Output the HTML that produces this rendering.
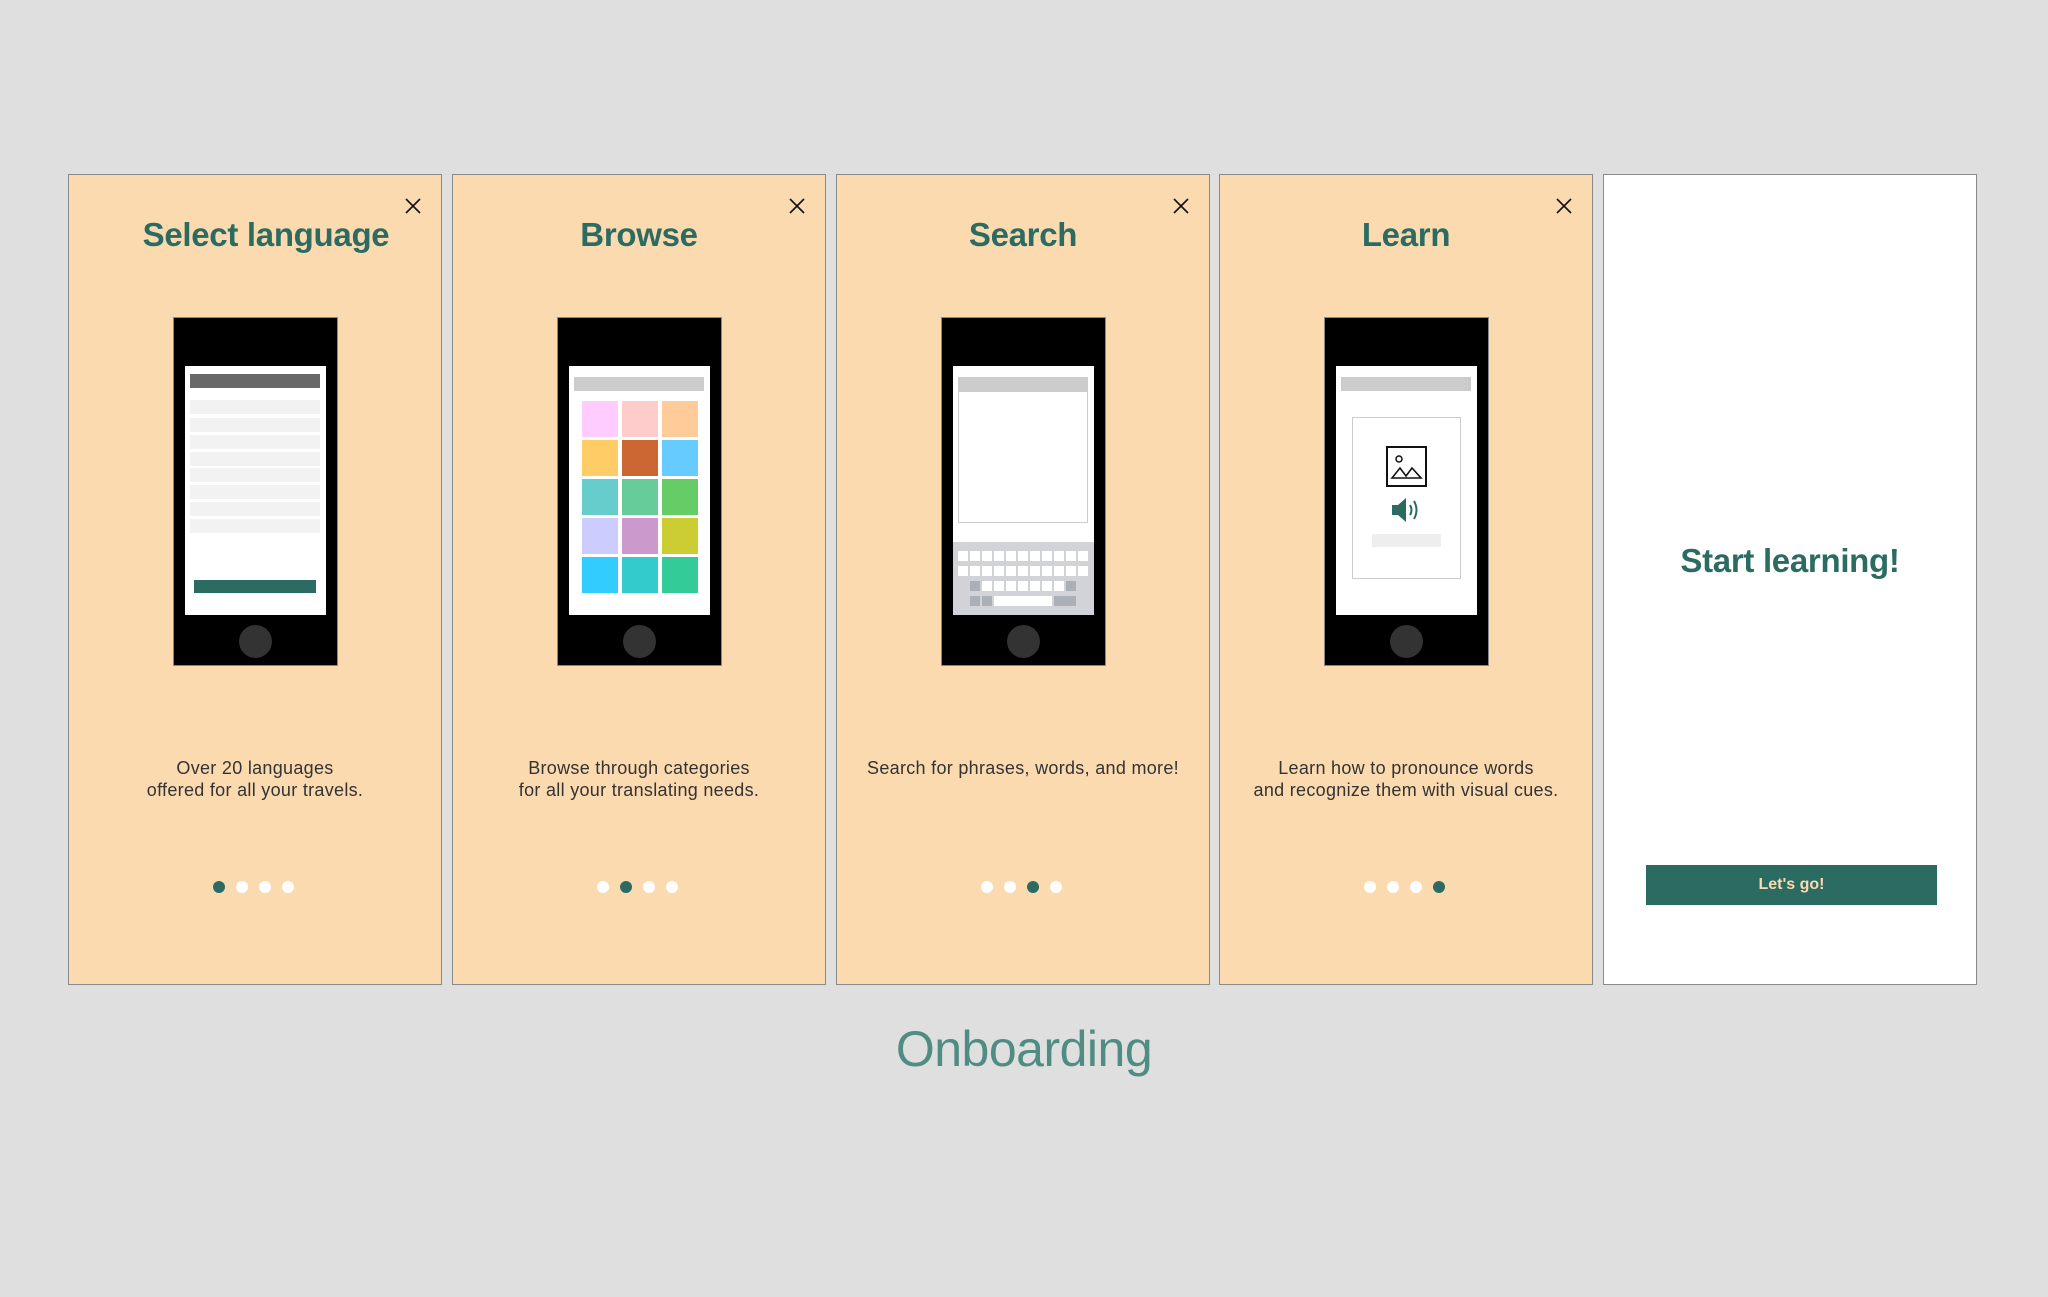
<!DOCTYPE html>
<html><head><meta charset="utf-8">
<style>
*{margin:0;padding:0;box-sizing:border-box}
body{width:2048px;height:1297px;background:#dfdfdf;position:relative;overflow:hidden;font-family:"Liberation Sans",sans-serif}
.card{position:absolute;top:174px;width:374px;height:811px;background:#fbdab0;border:1px solid #8a8a8a}
.card.w{background:#fff}
.t{position:absolute;left:0;right:0;top:213px;text-align:center;font-weight:bold;font-size:33px;color:#2b6b62;letter-spacing:-0.3px}
.x{position:absolute;left:335px;top:22px;width:18px;height:18px}
.ph{position:absolute;left:104px;top:142px;width:165px;height:349px;background:#000;border:1px solid #888}
.sc{position:absolute;left:11px;top:48px;width:141px;height:249px;background:#fff;overflow:hidden}
.hb{position:absolute;top:307px;width:33px;height:33px;border-radius:50%;background:#333;left:65px}
.d{position:absolute;left:0;right:0;text-align:center;font-size:18px;line-height:22px;color:#333;top:582px;letter-spacing:0.3px}
.dots{position:absolute;top:706px;left:-4px;right:0;display:flex;justify-content:center;gap:11px}
.dots i{width:12px;height:12px;border-radius:50%;background:#fff;display:block}
.dots i.on{background:#2b6b62}
.a{position:absolute}
</style></head><body>

<div class="card" style="left:68px">
<div class="t" style="top:41px;left:22px">Select language</div>
<svg class="x" viewBox="0 0 18 18"><path d="M2 2L16 16M16 2L2 16" stroke="#111" stroke-width="1.6"/></svg>
<div class="ph"><div class="sc">
<div class="a" style="left:5px;top:8px;width:130px;height:14px;background:#686868"></div>
<div class="a" style="left:5px;top:34px;width:130px;height:14px;background:#f2f2f2"></div>
<div class="a" style="left:5px;top:52px;width:130px;height:14px;background:#f2f2f2"></div>
<div class="a" style="left:5px;top:69px;width:130px;height:14px;background:#f2f2f2"></div>
<div class="a" style="left:5px;top:86px;width:130px;height:14px;background:#f2f2f2"></div>
<div class="a" style="left:5px;top:102px;width:130px;height:14px;background:#f2f2f2"></div>
<div class="a" style="left:5px;top:119px;width:130px;height:14px;background:#f2f2f2"></div>
<div class="a" style="left:5px;top:136px;width:130px;height:14px;background:#f2f2f2"></div>
<div class="a" style="left:5px;top:153px;width:130px;height:14px;background:#f2f2f2"></div>
<div class="a" style="left:9px;top:214px;width:122px;height:13px;background:#2b6b62"></div>
</div><div class="hb"></div></div>
<div class="d">Over 20 languages<br>offered for all your travels.</div>
<div class="dots"><i class="on"></i><i></i><i></i><i></i></div>
</div>

<div class="card" style="left:452px">
<div class="t" style="top:41px">Browse</div>
<svg class="x" viewBox="0 0 18 18"><path d="M2 2L16 16M16 2L2 16" stroke="#111" stroke-width="1.6"/></svg>
<div class="ph"><div class="sc">
<div class="a" style="left:5px;top:11px;width:130px;height:14px;background:#ccc"></div>
<div class="a" style="left:13px;top:35px;width:116px;display:grid;grid-template-columns:36px 36px 36px;grid-auto-rows:36px;gap:3px 4px">
<i style="background:#ffccff"></i><i style="background:#ffcccc"></i><i style="background:#ffcc99"></i>
<i style="background:#ffcc66"></i><i style="background:#cc6633"></i><i style="background:#66ccff"></i>
<i style="background:#66cccc"></i><i style="background:#66cc99"></i><i style="background:#66cc66"></i>
<i style="background:#ccccff"></i><i style="background:#cc99cc"></i><i style="background:#cccc33"></i>
<i style="background:#33ccff"></i><i style="background:#33cccc"></i><i style="background:#33cc99"></i>
</div>
</div><div class="hb"></div></div>
<div class="d">Browse through categories<br>for all your translating needs.</div>
<div class="dots"><i></i><i class="on"></i><i></i><i></i></div>
</div>

<div class="card" style="left:836px">
<div class="t" style="top:41px">Search</div>
<svg class="x" viewBox="0 0 18 18"><path d="M2 2L16 16M16 2L2 16" stroke="#111" stroke-width="1.6"/></svg>
<div class="ph"><div class="sc">
<div class="a" style="left:5px;top:11px;width:130px;height:146px;border:1px solid #ccc"></div>
<div class="a" style="left:5px;top:11px;width:130px;height:15px;background:#ccc"></div>
<div class="a" style="left:0;top:176px;width:141px;height:73px;background:#d1d3d9">
<svg width="141" height="73" viewBox="0 0 141 73">
<g fill="#fff">
<rect x="5" y="9" width="10" height="10"/><rect x="17" y="9" width="10" height="10"/><rect x="29" y="9" width="10" height="10"/><rect x="41" y="9" width="10" height="10"/><rect x="53" y="9" width="10" height="10"/><rect x="65" y="9" width="10" height="10"/><rect x="77" y="9" width="10" height="10"/><rect x="89" y="9" width="10" height="10"/><rect x="101" y="9" width="10" height="10"/><rect x="113" y="9" width="10" height="10"/><rect x="125" y="9" width="10" height="10"/>
<rect x="5" y="24" width="10" height="10"/><rect x="17" y="24" width="10" height="10"/><rect x="29" y="24" width="10" height="10"/><rect x="41" y="24" width="10" height="10"/><rect x="53" y="24" width="10" height="10"/><rect x="65" y="24" width="10" height="10"/><rect x="77" y="24" width="10" height="10"/><rect x="89" y="24" width="10" height="10"/><rect x="101" y="24" width="10" height="10"/><rect x="113" y="24" width="10" height="10"/><rect x="125" y="24" width="10" height="10"/>
<rect x="29" y="39" width="10" height="10"/><rect x="41" y="39" width="10" height="10"/><rect x="53" y="39" width="10" height="10"/><rect x="65" y="39" width="10" height="10"/><rect x="77" y="39" width="10" height="10"/><rect x="89" y="39" width="10" height="10"/><rect x="101" y="39" width="10" height="10"/>
<rect x="41" y="54" width="58" height="10"/>
</g>
<g fill="#abb0b8">
<rect x="17" y="39" width="10" height="10"/><rect x="113" y="39" width="10" height="10"/>
<rect x="17" y="54" width="10" height="10"/><rect x="29" y="54" width="10" height="10"/><rect x="101" y="54" width="22" height="10"/>
</g></svg></div>
</div><div class="hb"></div></div>
<div class="d">Search for phrases, words, and more!</div>
<div class="dots"><i></i><i></i><i class="on"></i><i></i></div>
</div>

<div class="card" style="left:1219px">
<div class="t" style="top:41px">Learn</div>
<svg class="x" viewBox="0 0 18 18"><path d="M2 2L16 16M16 2L2 16" stroke="#111" stroke-width="1.6"/></svg>
<div class="ph"><div class="sc">
<div class="a" style="left:5px;top:11px;width:130px;height:14px;background:#ccc"></div>
<div class="a" style="left:16px;top:51px;width:109px;height:162px;border:1px solid #ccc"></div>
<svg class="a" style="left:50px;top:80px" width="41" height="41" viewBox="0 0 41 41">
<rect x="1" y="1" width="39" height="39" fill="#fff" stroke="#111" stroke-width="2"/>
<circle cx="13" cy="13" r="3" fill="none" stroke="#111" stroke-width="1.5"/>
<path d="M6 32L14 22L20 30L26 22L35 32Z" fill="none" stroke="#111" stroke-width="1.6"/>
</svg>
<svg class="a" style="left:55px;top:131px" width="32" height="26" viewBox="0 0 32 26">
<path d="M1 8H7L15 1V25L7 18H1Z" fill="#2b6b62"/>
<path d="M19 8Q22 13 19 18" fill="none" stroke="#2b6b62" stroke-width="2"/>
<path d="M23 4Q28 13 23 22" fill="none" stroke="#2b6b62" stroke-width="2"/>
</svg>
<div class="a" style="left:36px;top:168px;width:69px;height:13px;background:#eee"></div>
</div><div class="hb"></div></div>
<div class="d">Learn how to pronounce words<br>and recognize them with visual cues.</div>
<div class="dots"><i></i><i></i><i></i><i class="on"></i></div>
</div>

<div class="card w" style="left:1603px">
<div class="t" style="top:367px">Start learning!</div>
<div class="a" style="left:42px;top:690px;width:291px;height:40px;background:#2b6b62;color:#fbdab0;font-weight:bold;font-size:16px;line-height:40px;text-align:center">Let's go!</div>
</div>

<div class="a" style="left:0;width:2048px;top:1019px;text-align:center;font-size:50px;line-height:60px;color:#4f8c82;letter-spacing:-0.5px">Onboarding</div>

</body></html>
